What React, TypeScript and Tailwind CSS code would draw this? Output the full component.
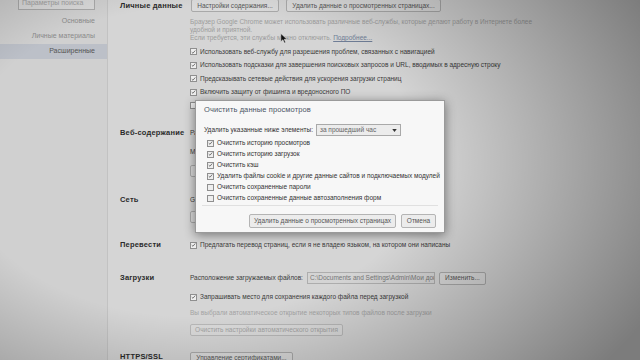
import React from "react";

function Check({ on = true, dim = false }: { on?: boolean; dim?: boolean }) {
  return (
    <span
      className={`inline-flex h-[7px] w-[7px] shrink-0 items-center justify-center border ${
        dim ? "border-[#a8a8a8] bg-[#dcdcdc]" : "border-[#8f8f8f] bg-[#eeeeee]"
      }`}
    >
      {on && (
        <svg viewBox="0 0 8 8" className="h-[6px] w-[6px]">
          <path d="M1.2 4.2 L3.1 6 L6.8 1.6" fill="none" stroke="#5a5a5a" strokeWidth="1.3" />
        </svg>
      )}
    </span>
  );
}

function Btn({ children, className = "" }: { children: React.ReactNode; className?: string }) {
  return (
    <span
      className={`inline-flex h-[12px] items-center justify-center whitespace-nowrap rounded-[2px] border border-[#a9a9a9] bg-[#dadada] px-[5px] text-[#555] ${className}`}
    >
      {children}
    </span>
  );
}

function Row({ children, h = "h-[13.5px]" }: { children: React.ReactNode; h?: string }) {
  return <div className={`flex items-center gap-[3px] whitespace-nowrap ${h}`}>{children}</div>;
}

function Label({ children, h = "h-[13px]" }: { children: React.ReactNode; h?: string }) {
  return (
    <div
      className={`w-[82px] shrink-0 whitespace-nowrap pl-[12px] text-[7.5px] font-bold tracking-[0.2px] text-[#2a2a2a] ${h} flex items-center`}
    >
      {children}
    </div>
  );
}

export default function App() {
  return (
    <div className="relative h-[360px] w-[640px] overflow-hidden bg-[#d5d5d5] text-[6.5px] text-[#3a3a3a] [font-family:'Liberation_Sans',Arial,sans-serif]">
      <div className="flex h-full">
        {/* sidebar */}
        <aside className="w-[108px] shrink-0 border-r border-[#c2c2c2] bg-[#d0d0d0] text-[7px]">
          <div className="ml-[18px] mt-[-3px] flex h-[13px] w-[77px] items-center border border-[#a9a9a9] bg-[#d9d9d9] px-[3px] text-[#a0a0a0]">
            Параметры поиска
          </div>
          <div className="mt-[4px] flex h-[15px] items-center justify-end pr-[12px] text-[#8a8a8a]">Основные</div>
          <div className="flex h-[15px] items-center justify-end pr-[12px] text-[#8a8a8a]">Личные материалы</div>
          <div className="flex h-[15px] items-center justify-end bg-[#bcc0c8] pr-[12px] text-[#555]">Расширенные</div>
        </aside>

        {/* main */}
        <main className="flex-1">
          {/* Личные данные */}
          <section className="mt-[-1px] flex">
            <Label>Личные данные</Label>
            <div>
              <div className="flex h-[13px] items-center gap-[7px] pl-[1px]">
                <Btn className="h-[13px] w-[88px]">Настройки содержания...</Btn>
                <Btn className="h-[13px] w-[155px]">Удалить данные о просмотренных страницах...</Btn>
              </div>
              <p className="mt-[6px] whitespace-nowrap leading-[8px] text-[#9c9c9c]">
                Браузер Google Chrome может использовать различные веб-службы, которые делают работу в Интернете более
                <br />
                удобной и приятной.
                <br />
                Если требуется, эти службы можно отключить.{" "}
                <span className="text-[#6f7d96] underline">Подробнее...</span>
              </p>
              <div className="mt-[3px]">
                <Row>
                  <Check />
                  Использовать веб-службу для разрешения проблем, связанных с навигацией
                </Row>
                <Row>
                  <Check />
                  Использовать подсказки для завершения поисковых запросов и URL, вводимых в адресную строку
                </Row>
                <Row>
                  <Check />
                  Предсказывать сетевые действия для ускорения загрузки страниц
                </Row>
                <Row>
                  <Check />
                  Включить защиту от фишинга и вредоносного ПО
                </Row>
                <Row>
                  <Check on={false} />
                  Автоматически отправлять в Google статистику использования
                </Row>
              </div>
            </div>
          </section>

          {/* Веб-содержание */}
          <section className="mt-[14px] flex">
            <Label>Веб-содержание</Label>
            <div>
              <Row h="h-[13px]">Размер шрифта:</Row>
              <div className="mt-[6px]">
                <Row h="h-[13px]">Масштаб страницы:</Row>
              </div>
              <Btn className="mt-[6px]">Настроить шрифты...</Btn>
            </div>
          </section>

          {/* Сеть */}
          <section className="mt-[17px] flex">
            <Label>Сеть</Label>
            <div>
              <Row h="h-[13px]">
                Google Chrome использует системные настройки прокси-сервера для подключения.
              </Row>
              <Btn className="mt-[4px]">Изменить настройки прокси-сервера...</Btn>
            </div>
          </section>

          {/* Перевести */}
          <section className="mt-[16px] flex">
            <Label>Перевести</Label>
            <Row h="h-[13px]">
              <Check />
              Предлагать перевод страниц, если я не владею языком, на котором они написаны
            </Row>
          </section>

          {/* Загрузки */}
          <section className="mt-[19.5px] flex">
            <Label h="h-[14px]">Загрузки</Label>
            <div>
              <div className="flex h-[14px] items-center gap-[4px] whitespace-nowrap">
                Расположение загружаемых файлов:
                <span className="flex h-[12px] w-[128px] items-center overflow-hidden border border-[#adadad] bg-[#d4d4d4] px-[2px] text-[#777]">
                  C:\Documents and Settings\Admin\Мои документы
                </span>
                <Btn className="h-[13px] w-[47px]">Изменить...</Btn>
              </div>
              <div className="mt-[5.5px]">
                <Row h="h-[13px]">
                  <Check />
                  Запрашивать место для сохранения каждого файла перед загрузкой
                </Row>
              </div>
              <div className="mt-[3px] flex h-[13px] items-center whitespace-nowrap text-[#a3a3a3]">
                Вы выбрали автоматическое открытие некоторых типов файлов после загрузки
              </div>
              <Btn className="mt-[4.5px] w-[153px] border-[#b8b8b8] text-[#a3a3a3]">
                Очистить настройки автоматического открытия
              </Btn>
            </div>
          </section>

          {/* HTTPS/SSL */}
          <section className="mt-[14.5px] flex">
            <Label>HTTPS/SSL</Label>
            <Btn className="mt-[1px] w-[103px]">Управление сертификатами...</Btn>
          </section>
        </main>
      </div>

      {/* vignette */}
      <div className="pointer-events-none absolute inset-0 bg-[radial-gradient(ellipse_80%_95%_at_30%_45%,rgba(0,0,0,0)_45%,rgba(0,0,0,0.42)_100%)]" />

      {/* cursor */}
      <svg viewBox="0 0 8 12" className="absolute left-[280px] top-[33px] h-[11px] w-[8px]">
        <path d="M0.5 0.5 L0.5 9.5 L2.8 7.4 L4.4 11 L5.8 10.4 L4.3 6.9 L7.3 6.9 Z" fill="#111" stroke="#eee" strokeWidth="0.6" />
      </svg>

      {/* dialog */}
      <div className="absolute left-[195px] top-[100px] flex h-[133px] w-[250px] flex-col border border-[#9a9a9a] bg-[#f7f7f7] text-[6.5px] shadow-[0_2px_10px_rgba(0,0,0,0.45)]">
        <div className="mt-[3px] flex h-[12px] items-center pl-[8px] text-[7.5px] tracking-[0.1px] text-[#4c5566]">
          Очистить данные просмотров
        </div>
        <div className="mt-[7.5px] flex h-[13px] items-center gap-[3px] pl-[8px] whitespace-nowrap text-[#333]">
          Удалить указанные ниже элементы:
          <span className="flex h-[12px] w-[85px] items-center justify-between border border-[#a9a9a9] bg-[#ececec] px-[3px] text-[#666]">
            за прошедший час
            <svg viewBox="0 0 6 4" className="h-[3px] w-[5px]">
              <path d="M0 0 H6 L3 4 Z" fill="#333" />
            </svg>
          </span>
        </div>
        <div className="mt-[1px] pl-[11px] text-[#333]">
          {[
            ["Очистить историю просмотров", true],
            ["Очистить историю загрузок", true],
            ["Очистить кэш", true],
            ["Удалить файлы cookie и другие данные сайтов и подключаемых модулей", true],
            ["Очистить сохраненные пароли", false],
            ["Очистить сохраненные данные автозаполнения форм", false],
          ].map(([t, on]) => (
            <Row key={t as string} h="h-[11px]">
              <Check on={on as boolean} />
              {t as string}
            </Row>
          ))}
        </div>
        <div className="mx-[6px] mt-[1.5px] h-px bg-[#e0e0e0]" />
        <div className="mt-[8px] flex h-[14px] items-center justify-end gap-[5px] pr-[8px]">
          <span className="flex h-[14px] w-[147px] items-center justify-center whitespace-nowrap rounded-[2px] border border-[#b4b4b4] bg-[#ececec] text-[#555]">
            Удалить данные о просмотренных страницах
          </span>
          <span className="flex h-[14px] w-[35px] items-center justify-center rounded-[2px] border border-[#b4b4b4] bg-[#ececec] text-[#555]">
            Отмена
          </span>
        </div>
      </div>
    </div>
  );
}
